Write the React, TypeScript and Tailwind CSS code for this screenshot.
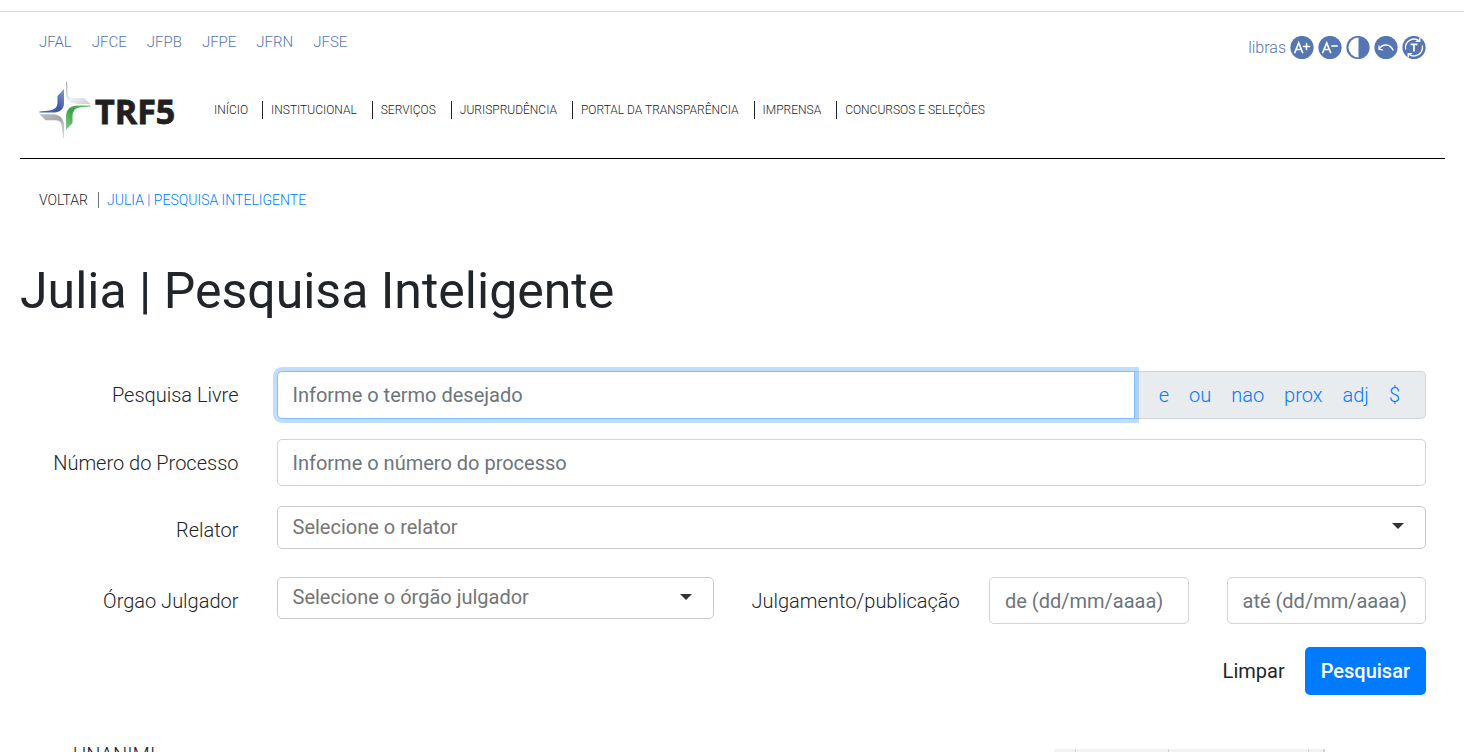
import type { ReactNode } from 'react';

const courts = ['JFAL', 'JFCE', 'JFPB', 'JFPE', 'JFRN', 'JFSE'];
const menu = [
  'INÍCIO',
  'INSTITUCIONAL',
  'SERVIÇOS',
  'JURISPRUDÊNCIA',
  'PORTAL DA TRANSPARÊNCIA',
  'IMPRENSA',
  'CONCURSOS E SELEÇÕES',
];
const operators = ['e', 'ou', 'nao', 'prox', 'adj', '$'];

const field =
  'block w-full rounded-[5px] border border-[#ced4da] bg-white px-[15px] font-normal placeholder:text-[#6c757d] placeholder:opacity-100 outline-none';

function Logo() {
  return (
    <svg viewBox="0 0 142 58" className="h-[58px] w-[142px]" role="img" aria-label="TRF5">
      <defs>
        <linearGradient id="blue" x1="0" y1="1" x2="1" y2="0">
          <stop offset="0" stopColor="#4a63ad" />
          <stop offset="0.5" stopColor="#3f59a8" />
          <stop offset="1" stopColor="#8b97cb" />
        </linearGradient>
        <linearGradient id="green" x1="0" y1="1" x2="1" y2="0">
          <stop offset="0" stopColor="#8cc98a" />
          <stop offset="0.5" stopColor="#35a246" />
          <stop offset="1" stopColor="#6fbf73" />
        </linearGradient>
        <linearGradient id="light" x1="0" y1="0" x2="1" y2="1">
          <stop offset="0" stopColor="#a9abad" />
          <stop offset="0.5" stopColor="#f0f1f1" />
          <stop offset="1" stopColor="#c9cacc" />
        </linearGradient>
        <linearGradient id="grey" x1="0" y1="0" x2="1" y2="1">
          <stop offset="0" stopColor="#bfc0c2" />
          <stop offset="0.5" stopColor="#a4a6a8" />
          <stop offset="1" stopColor="#dcdddd" />
        </linearGradient>
      </defs>
      <path d="M25 9 L18.500 16 V23 Q18.500 30 9 30.800 L0.500 31.400 V32.600 H13 Q25 32.600 25 23 Z" fill="url(#blue)" />
      <path d="M27 0.500 L28.500 4 V13 Q28.500 18 34 18 H45 L51.500 24 H39 Q27 24 27 13 Z" fill="url(#light)" />
      <path d="M51.500 25.600 H39 Q27 26 27 37 V50 L33.500 43 V36 Q33.500 28 42 27.200 L51.500 26.600 Z" fill="url(#green)" />
      <path d="M0.500 34.200 H13 Q25 34.500 25 46 V58 H24 L23 48 Q23 40.200 17 40.200 H6.500 Z" fill="url(#grey)" />
      <text
        x="56"
        y="44"
        fill="#231f20"
        stroke="#231f20"
        strokeWidth="0.8"
        className="font-['Open_Sans',sans-serif] text-[34px] font-bold"
      >
        TRF5
      </text>
    </svg>
  );
}

function Tool({ label, children }: { label: string; children: ReactNode }) {
  return (
    <button type="button" aria-label={label} className="size-6">
      <svg viewBox="0 0 24 24" className="size-6" fill="none" stroke="#fff" strokeLinecap="round">
        <circle cx="12" cy="11.500" r="11.600" fill="#5675b3" stroke="none" />
        {children}
      </svg>
    </button>
  );
}

function Label({ htmlFor, children }: { htmlFor: string; children: ReactNode }) {
  return (
    <label htmlFor={htmlFor} className="col-span-2 px-[19px] pt-[9px] text-right whitespace-nowrap">
      {children}
    </label>
  );
}

function Picker({ id, text, height }: { id: string; text: string; height: string }) {
  return (
    <div className="relative">
      <select
        id={id}
        className={`${height} block w-full appearance-none rounded-[5px] border border-[#c8cacd] bg-white px-[15px] pb-0.5 font-normal text-[#757575] outline-none`}
      >
        <option>{text}</option>
      </select>
      <svg viewBox="0 0 12 6" className="pointer-events-none absolute top-[17px] right-[22px] h-1.5 w-3" fill="#333">
        <path d="M0 0 H12 L6 6 Z" />
      </svg>
    </div>
  );
}

export default function App() {
  return (
    <div className="h-screen overflow-hidden bg-white pt-[11px] font-['Roboto',sans-serif] text-[20px] leading-[30px] font-light text-[#212529]">
      <div className="border-t border-[#d9dadb] pr-[19px] pl-5">
        <header className="border-b border-black px-[19px] pb-5">
          <div className="flex items-start justify-between pt-5">
            <nav className="flex gap-5 text-[15px] leading-5 text-[#5675b3]">
              {courts.map((c) => (
                <a key={c} href="#">
                  {c}
                </a>
              ))}
            </nav>
            <div className="flex h-8 items-center gap-1 text-[16px] text-[#5675b3]">
              <a href="#">libras</a>
              <Tool label="Aumentar fonte">
                <path d="M4.800 16.500 L8.700 7 L12.600 16.500 M6.300 13.500 H11.100" strokeWidth="1.700" />
                <path d="M13.500 10.500 H19.500 M16.500 7.500 V13.500" strokeWidth="1.600" />
              </Tool>
              <Tool label="Diminuir fonte">
                <path d="M4.800 16.500 L8.700 7 L12.600 16.500 M6.300 13.500 H11.100" strokeWidth="1.700" />
                <path d="M13.800 10 H19.200" strokeWidth="1.600" />
              </Tool>
              <Tool label="Contraste">
                <path d="M12.500 1.500 A10 10 0 0 0 12.500 21.500 Z" fill="#fff" stroke="none" />
              </Tool>
              <Tool label="Desfazer">
                <path d="M5.200 13 C8.500 7.500 16 7.500 19 14" strokeWidth="1.400" />
                <path d="M5 9.800 V13.200 L8.400 13.800" strokeWidth="1.200" />
              </Tool>
              <Tool label="Restaurar texto">
                <path d="M8.500 8.300 H15.500 M12 8.300 V15.500" strokeWidth="1.700" strokeLinecap="butt" />
                <path d="M3.600 13 A8.600 8.600 0 0 1 17.200 4.800 M17.800 2 V5.400 H14.300" strokeWidth="1.300" />
                <path d="M20.400 10 A8.600 8.600 0 0 1 6.800 18.200 M6.200 21 V17.600 H9.700" strokeWidth="1.300" />
              </Tool>
            </div>
          </div>
          <div className="mt-4 flex items-center">
            <a href="#">
              <Logo />
            </a>
            <nav className="ml-[33px] flex pt-px text-[12px] leading-[18px]">
              {menu.map((m, i) => (
                <a key={m} href="#" className={i ? 'mr-[15px] border-l border-[#212529] pl-2' : 'mr-[14px]'}>
                  {m}
                </a>
              ))}
            </nav>
          </div>
        </header>

        <nav className="mt-[33px] flex px-[19px] text-[14px] leading-4">
          <a href="#" className="pr-2.5">
            VOLTAR
          </a>
          <a href="#" className="border-l border-[#6c757d] pl-2 text-[#007bff]">
            JULIA | PESQUISA INTELIGENTE
          </a>
        </nav>

        <h1 className="mt-[53px] text-[50px] leading-[60px] font-normal">Julia | Pesquisa Inteligente</h1>

        <form className="mt-[50px]" onSubmit={(e) => e.preventDefault()}>
          <div className="grid grid-cols-12">
            <Label htmlFor="termo">Pesquisa Livre</Label>
            <div className="col-span-10 flex px-[19px]">
              <div className="relative min-w-0 flex-1">
                <input
                  id="termo"
                  placeholder="Informe o termo desejado"
                  className="block h-12 w-full rounded-l-[5px] border border-[#80bdff] bg-white px-[15px] font-normal shadow-[0_0_0_4px_rgba(0,123,255,0.25)] outline-none placeholder:text-[#6c757d] placeholder:opacity-100"
                />
              </div>
              <div className="flex items-center gap-5 rounded-r-[5px] border border-l-0 border-[#ced4da] bg-[#e9ecef] pr-[25px] pl-6 text-[#007bff]">
                {operators.map((o) => (
                  <button key={o} type="button">
                    {o}
                  </button>
                ))}
              </div>
            </div>
          </div>

          <div className="mt-5 grid grid-cols-12">
            <Label htmlFor="processo">Número do Processo</Label>
            <div className="col-span-10 px-[19px]">
              <input id="processo" placeholder="Informe o número do processo" className={`${field} h-[47px]`} />
            </div>
          </div>

          <div className="mt-5 grid grid-cols-12">
            <Label htmlFor="relator">Relator</Label>
            <div className="col-span-10 px-[19px]">
              <Picker id="relator" text="Selecione o relator" height="h-[43px]" />
            </div>
          </div>

          <div className="mt-7 grid grid-cols-12">
            <Label htmlFor="orgao">Órgao Julgador</Label>
            <div className="col-span-4 px-[19px]">
              <Picker id="orgao" text="Selecione o órgão julgador" height="h-[42px]" />
            </div>
            <label htmlFor="de" className="col-span-2 pt-[9px] pl-[19px] whitespace-nowrap">
              Julgamento/publicação
            </label>
            <div className="col-span-2 px-[19px]">
              <input id="de" placeholder="de (dd/mm/aaaa)" className={`${field} h-[47px]`} />
            </div>
            <div className="col-span-2 px-[19px]">
              <input aria-label="até" placeholder="até (dd/mm/aaaa)" className={`${field} h-[47px]`} />
            </div>
          </div>

          <div className="mt-[23px] flex justify-end gap-1 px-[19px]">
            <button type="reset" className="h-12 px-4 font-normal">
              Limpar
            </button>
            <button type="submit" className="h-12 rounded-[5px] bg-[#007bff] px-4 font-medium text-white">
              Pesquisar
            </button>
          </div>
        </form>

        <div className="mt-[54px] flex justify-between pr-[120px] pl-[53px]">
          <p className="-mt-1 leading-5">UNANIMI</p>
          <div className="flex h-10 w-[271px] border-r-2 border-[#ced4da] bg-[#f1f2f4]">
            <span className="w-[22px] border-r border-[#ced4da]" />
            <span className="w-[93px] border-r border-[#ced4da]" />
            <span className="w-[140px] border-r border-[#ced4da]" />
          </div>
        </div>
      </div>
    </div>
  );
}
